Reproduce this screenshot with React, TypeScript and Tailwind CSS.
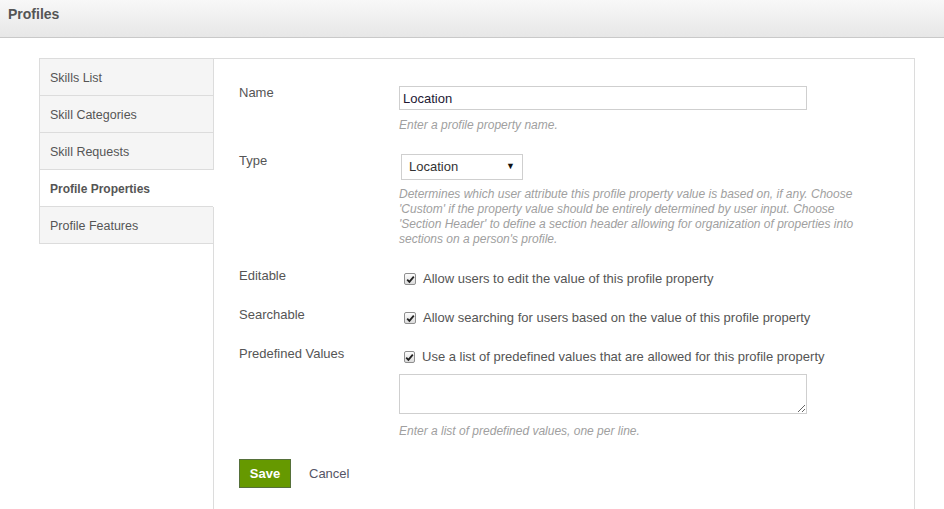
import React from 'react';

const tabs = ['Skills List', 'Skill Categories', 'Skill Requests', 'Profile Properties', 'Profile Features'];

function Check({ label }: { label: string }) {
  return (
    <div className="flex items-center h-[16px] whitespace-nowrap">
      <span className="w-[12px] h-[12px] ml-[5px] mr-[7px] rounded-[2px] border border-[#8f8f8f] bg-gradient-to-b from-[#fdfdfd] to-[#dcdcdc] flex items-center justify-center">
        <svg width="9" height="9" viewBox="0 0 9 9">
          <path d="M1.2 4.6 L3.4 6.8 L7.8 1.6" fill="none" stroke="#222" strokeWidth="1.8" />
        </svg>
      </span>
      <span className="text-[13px] text-[#555]">{label}</span>
    </div>
  );
}

export default function App() {
  return (
    <div className="min-h-[509px] bg-white font-['Liberation_Sans',Arial,sans-serif]">
      {/* Top bar */}
      <header className="h-[38px] border-b border-[#c9c9c9] bg-gradient-to-b from-[#f8f8f8] to-[#e7e7e7] px-[8px] pt-[6px]">
        <h1 className="text-[14px] leading-[16px] font-bold text-[#555]">Profiles</h1>
      </header>

      <section className="ml-[39px] mt-[20px] w-[876px] border-t border-r border-[#dcdcdc] flex min-h-[460px]">
        {/* Left tabs */}
        <nav className="w-[175px] flex flex-col">
          {tabs.map((t) => {
            const active = t === 'Profile Properties';
            return (
              <div
                key={t}
                className={
                  active
                    ? 'h-[37px] flex items-center pl-[10px] pt-[2px] border-l border-b border-[#dcdcdc] bg-white text-[12px] font-bold text-[#555] mr-[1px]'
                    : 'h-[37px] flex items-center pl-[10px] pt-[2px] border-l border-b border-r border-[#dcdcdc] bg-[#f5f5f5] text-[12.5px] text-[#555]'
                }
              >
                {t}
              </div>
            );
          })}
          <div className="flex-1 border-r border-[#dcdcdc]" />
        </nav>

        {/* Form */}
        <div className="flex-1 pl-[25px] pt-[25px] text-[13px] text-[#555]">
          <div className="flex">
            <label className="w-[160px] pt-[1px] leading-[16px]">Name</label>
            <div className="w-[408px]">
              <input
                defaultValue="Location"
                className="mt-[2px] w-[408px] h-[24px] border border-[#cfcfcf] px-[3px] text-[13px] text-[#221833] outline-none"
              />
              <p className="mt-[8px] italic text-[12px] text-[#a0a0a0] leading-[15px]">Enter a profile property name.</p>
            </div>
          </div>

          <div className="flex mt-[19px]">
            <label className="w-[160px] pt-[1px] leading-[16px]">Type</label>
            <div className="w-[470px]">
              <div className="relative mt-[2px] ml-[2px] w-[122px] h-[26px]">
                <select className="appearance-none w-full h-full border border-[#cfcfcf] bg-white pl-[7px] text-[13px] text-[#333] outline-none">
                  <option>Location</option>
                </select>
                <span className="pointer-events-none absolute right-[8px] top-[6px] text-[9px] text-[#111]">▼</span>
              </div>
              <p className="mt-[7px] italic text-[12px] text-[#a0a0a0] leading-[15px]">
                Determines which user attribute this profile property value is based on, if any. Choose 'Custom' if the
                property value should be entirely determined by user input. Choose 'Section Header' to define a section
                header allowing for organization of properties into sections on a person's profile.
              </p>
            </div>
          </div>

          <div className="flex mt-[20px] h-[39px]">
            <label className="w-[160px] pt-[1px] leading-[16px]">Editable</label>
            <div className="mt-[4px]">
              <Check label="Allow users to edit the value of this profile property" />
            </div>
          </div>

          <div className="flex h-[39px]">
            <label className="w-[160px] pt-[1px] leading-[16px]">Searchable</label>
            <div className="mt-[4px]">
              <Check label="Allow searching for users based on the value of this profile property" />
            </div>
          </div>

          <div className="flex">
            <label className="w-[160px] pt-[1px] leading-[16px]">Predefined Values</label>
            <div className="mt-[4px] w-[408px]">
              <Check label="Use a list of predefined values that are allowed for this profile property" />
              <textarea className="block mt-[9px] w-[408px] h-[40px] border border-[#cfcfcf] outline-none" />
              <p className="mt-[10px] italic text-[12px] text-[#a0a0a0] leading-[15px]">Enter a list of predefined values, one per line.</p>
            </div>
          </div>

          <div className="flex items-center mt-[20px]">
            <button className="w-[52px] h-[29px] bg-[#669900] border border-[#56703a] text-white text-[13px] font-bold">
              Save
            </button>
            <a className="ml-[18px] text-[13px] text-[#556]">Cancel</a>
          </div>
        </div>
      </section>
    </div>
  );
}
